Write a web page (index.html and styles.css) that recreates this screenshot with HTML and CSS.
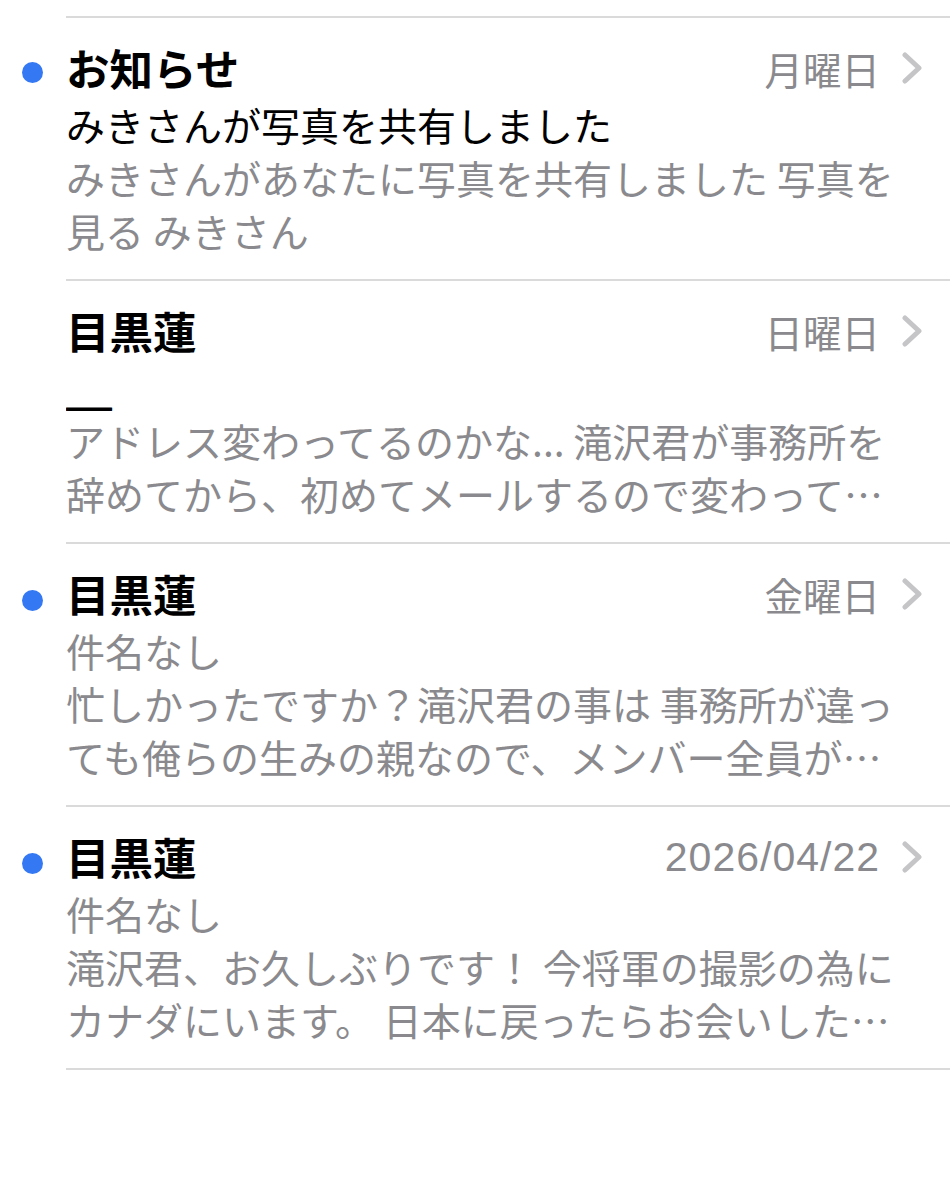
FILE: index.html
```html
<!DOCTYPE html>
<html lang="ja">
<head>
    <meta charset="UTF-8">
    <meta name="viewport" content="width=device-width, initial-scale=1.0">
    <title>メール</title>
    <link rel="stylesheet" href="styles.css">
</head>
<body>
    <ul class="mail-list">
        <li class="mail unread">
            <div class="mark"><span class="dot"></span></div>
            <div class="mail-body">
                <div class="mail-head">
                    <span class="sender">お知らせ</span>
                    <span class="date">月曜日</span>
                    <svg class="chev" width="20" height="32" viewBox="0 0 20 32"><path d="M3 3 L17 16 L3 29"/></svg>
                </div>
                <div class="subject">みきさんが写真を共有しました</div>
                <div class="preview">みきさんがあなたに写真を共有しました 写真を<br>見る みきさん</div>
            </div>
        </li>
        <li class="mail">
            <div class="mark"></div>
            <div class="mail-body">
                <div class="mail-head">
                    <span class="sender">目黒蓮</span>
                    <span class="date">日曜日</span>
                    <svg class="chev" width="20" height="32" viewBox="0 0 20 32"><path d="M3 3 L17 16 L3 29"/></svg>
                </div>
                <div class="subject"><span class="blank">＿</span></div>
                <div class="preview">アドレス変わってるのかな... 滝沢君が事務所を<br>辞めてから、初めてメールするので変わって…</div>
            </div>
        </li>
        <li class="mail unread">
            <div class="mark"><span class="dot"></span></div>
            <div class="mail-body">
                <div class="mail-head">
                    <span class="sender">目黒蓮</span>
                    <span class="date">金曜日</span>
                    <svg class="chev" width="20" height="32" viewBox="0 0 20 32"><path d="M3 3 L17 16 L3 29"/></svg>
                </div>
                <div class="subject muted">件名なし</div>
                <div class="preview">忙しかったですか？滝沢君の事は 事務所が違っ<br>ても俺らの生みの親なので、メンバー全員が…</div>
            </div>
        </li>
        <li class="mail unread">
            <div class="mark"><span class="dot"></span></div>
            <div class="mail-body">
                <div class="mail-head">
                    <span class="sender">目黒蓮</span>
                    <span class="date num">2026/04/22</span>
                    <svg class="chev" width="20" height="32" viewBox="0 0 20 32"><path d="M3 3 L17 16 L3 29"/></svg>
                </div>
                <div class="subject muted">件名なし</div>
                <div class="preview">滝沢君、お久しぶりです！ 今将軍の撮影の為に<br>カナダにいます。 日本に戻ったらお会いした…</div>
            </div>
        </li>
    </ul>
</body>
</html>
```

FILE: styles.css
```css
body {
    margin: 0;
    background: #fff;
    font-family: "Noto Sans CJK JP", "Noto Sans", sans-serif;
    color: #000;
}
.mail-list {
    list-style: none;
    margin: 16px 0 0;
    padding: 0;
}
.mail {
    display: grid;
    grid-template-columns: 66px 1fr;
}
.mark {
    padding-top: 46px;
}
.dot {
    display: block;
    width: 21px;
    height: 21px;
    margin-left: 22px;
    border-radius: 50%;
    background: #3479f3;
}
.mail-body {
    padding: 24px 28px 22px 0;
    border-bottom: 2px solid #dadada;
}
.mail:first-child .mail-body {
    border-top: 2px solid #dadada;
}
.mail-head {
    display: flex;
    align-items: center;
    height: 52px;
}
.sender {
    font-size: 43.5px;
    font-weight: 700;
    line-height: 52px;
}
.date {
    margin-left: auto;
    font-size: 38.5px;
    line-height: 52px;
    color: #8a8a8e;
}
.date.num {
    font-family: "Liberation Sans", Arial, sans-serif;
    font-size: 41px;
    letter-spacing: 1px;
}
.chev {
    margin-left: 22px;
    fill: none;
    stroke: #c5c5c8;
    stroke-width: 5;
    stroke-linecap: round;
    stroke-linejoin: round;
}
.subject {
    margin-top: 4px;
    font-size: 39px;
    line-height: 53px;
    white-space: nowrap;
}
.subject.muted {
    color: #8a8a8e;
}
.blank {
    display: inline-block;
    transform: scaleX(1.18);
    transform-origin: left center;
    text-shadow: 0 1px 0 #000, 0 2px 0 #000;
}
.preview {
    font-size: 39px;
    line-height: 53px;
    color: #8a8a8e;
    white-space: nowrap;
}
```
